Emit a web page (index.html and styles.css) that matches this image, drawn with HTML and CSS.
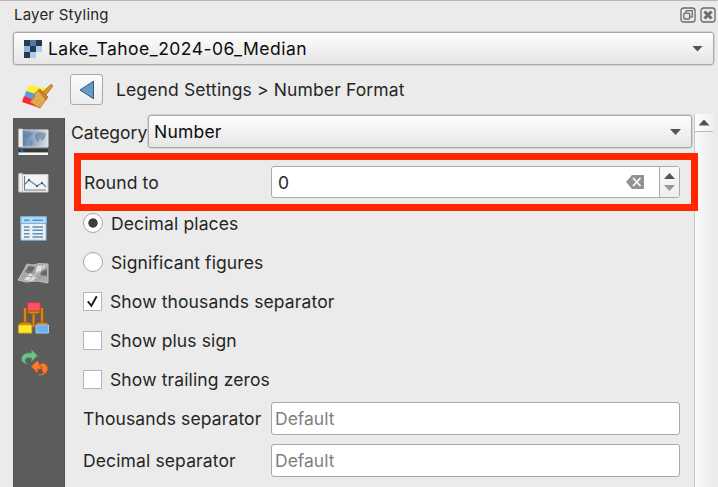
FILE: index.html
```html
<!DOCTYPE html>
<html lang="en">
<head>
<meta charset="utf-8">
<title>Layer Styling</title>
<link rel="stylesheet" href="styles.css">
</head>
<body>
<header class="titlebar">
  <span class="title">Layer Styling</span>
  <svg class="win" viewBox="0 0 16 16"><rect x="1" y="1" width="14" height="14" rx="2.6"/><path d="M6 3.7h6.2v6.2H10M6 3.7V6"/><rect x="3.9" y="6.2" width="5.7" height="5.8" rx="1"/></svg>
  <svg class="win" viewBox="0 0 16 16"><rect x="1" y="1" width="14" height="14" rx="2.6"/><path class="cross" d="M4.5 4.5l7 7M11.5 4.5l-7 7"/></svg>
</header>
<div class="combo layer">
  <svg class="raster" viewBox="0 0 18 18"><path fill="#a9cdef" d="M0 0h18v18H0z"/><path fill="#27394c" d="M0 0h6v6H0zM12 0h6v6h-6zM6 6h6v6H6zM0 12h6v6H0z"/><path fill="#4f79a5" d="M6 0h6v6H6z"/><path fill="#8ab4dd" d="M0 6h6v6H0z"/><path fill="#ececec" d="M12 12h6v6h-6z"/></svg>
  <span class="layer-name">Lake_Tahoe_2024-06_Median</span>
  <i class="down"></i>
</div>
<main class="panel">
  <aside class="side">
    <div class="active-tab">
      <svg class="brush" viewBox="0 0 32 26"><path fill="#fff02d" d="M7 1q10 3 18 3l-3 10L4 8z"/><path fill="#5d9cd6" d="M4 7l17 5-3 8L2 14z"/><path fill="#ff2638" d="M2 12l15 6 1 6L0 18z"/><g stroke="#ad6c20" stroke-width=".8"><path fill="#d99537" d="M28.5.7q3-.5 1.700 2.400L23 12l-3-3z"/><path fill="#e5ac58" d="M14 8l4-2 7 7-2 4-5 7q-5-2-10-6 4-4 6-10z"/><path fill="#c58535" d="M16 6l2-1 8 8-2 3z"/><path d="M14 12l-4 6m7-3l-4 6m6-3l-3 5" fill="none" stroke="#c88a3c"/></g></svg>
    </div>
    <nav class="tabs">
      <svg class="map" viewBox="0 0 31 28"><defs><linearGradient id="sea"><stop stop-color="#577fae"/><stop offset="1" stop-color="#dce3ea"/></linearGradient></defs><path fill="url(#sea)" stroke="#dfe1df" d="M4 2h26v17H4z"/><path fill="#697f9b" opacity=".65" d="M6 6l5-2 4 2-4 3-2 2-3-3zM12 12l3 1-1 5-2-2zM17 6l4-2 7 1-1 5-3 3-2-3-2 5-3-5z"/><path fill="#efefed" stroke="#c9cbc8" stroke-width=".7" d="M.7 1h3.8v18H.7z"/><path fill="#343739" d="M.5 21H30v3H.5z"/><path fill="#1c69c5" d="M3 21h2v4H3z"/><path fill="#f3f3f1" d="M.5 24.5H30V27H.5z"/></svg>
      <svg class="graph" viewBox="0 0 31 20"><path fill="#f3f3f2" stroke="#c9cac9" d="M4 1.5h26V19H4z"/><path fill="#eee" stroke="#c7c8c7" d="M.8.7h3.7V19H.8z"/><path fill="none" stroke="#7a7a7a" d="M6.5 3v14H28"/><path fill="none" stroke="#5984b1" stroke-width="1.2" d="M6 12l5-5 8 6 5-3 4 4"/><path fill="#315d91" d="M10 6h2v2h-2zM18 12h2v2h-2zM23 9h2v2h-2z"/></svg>
      <svg class="table" viewBox="0 0 27 25"><path fill="#efefee" stroke="#69a5d6" d="M.8.7h25.4v23.6H.8z"/><path fill="#b4dcf6" stroke="#76b0dc" d="M.8.7h25.4v6.7H.8z"/><path fill="none" stroke="#5493cc" stroke-width="1.4" d="M4 4.2h5.5m3 0H23M4 11h5.5m3 0H23M4 14.3h5.5m3 0H23M4 17.7h5.5m3 0H23M4 21h5.5m3 0H23"/></svg>
      <svg class="terrain" viewBox="0 0 31 23"><path fill="#a9aaa9" stroke="#bebebe" d="M9 2q8 2 11-.5L30 2v19l-11-2-11 1-8-2q5-8 9-16z"/><path fill="#686868" d="M11 4l6 1-4 7-6-2zM23 9l6-2v7l-7-1z"/><path fill="#e2e2e1" d="M19 4l9-1-5 7-6 2zM12 11l7 4-5 4-8-1z"/><path stroke="#999" stroke-width=".7" fill="none" d="M6 8q9 5 23 0M3 14q13 1 26 1M19 3l-7 15M25 2l-4 17"/></svg>
      <svg class="brushes" viewBox="0 0 31 32"><path fill="none" stroke="#9e5c09" stroke-width="3.6" d="M7 6v17M15.5 10v16M24 6v17"/><path fill="none" stroke="#d98b22" stroke-width="1.8" d="M7 6v17M15.5 10v15M24 6v17"/><path fill="#fa5264" stroke="#d93641" d="M9.5.7h12.7v9H9.5z"/><path fill="#d28823" stroke="#9c5907" d="M9.5 9h12.7q0 3-5 3h-3q-4.7 0-4.7-3zM.7 23q0-3 4-3h5q4 0 4 3zM18 23q0-3 4-3h4q4 0 4 3z"/><path fill="#ffe82d" stroke="#ddb51a" d="M.7 23h13v8H.7z"/><path fill="#72aff0" stroke="#a1cdf3" d="M18 23h12.5v8H18z"/></svg>
      <svg class="history" viewBox="0 0 27 27"><path fill="#6fc08c" stroke="#419362" stroke-width=".8" d="M6.5 15Q-.5 14 .7 8.500 2.500 3 10.500 4V.7l6 6-6 6V9Q5 8 4 11q0 2 2.500 4z"/><path fill="#fa7b2b" stroke="#e45e12" stroke-width=".8" d="M16.5 11.500l-6 6 6 6.500v-4q5 .5 4.500-2-.5-1.500-3-1.500 3.500-3.500 7-.5 3 3 .5 7-3 4-8 3 4-.5 5-2.500"/></svg>
    </nav>
  </aside>
  <section class="content">
    <div class="crumbs">
      <span class="back"><svg viewBox="0 0 16 20"><path fill="#649bcb" stroke="#35577b" d="M14.5 1.2v17.5L1 10z"/></svg></span>
      <span class="crumb-text">Legend Settings &gt; Number Format</span>
    </div>
    <div class="scroller">
      <form class="form">
        <div class="category"><label class="category-label">Category</label><div class="combo select"><span class="number">Number</span><i class="down"></i></div></div>
        <div class="highlight">
          <label class="round-label">Round to</label>
          <div class="spin"><span class="zero">0</span>
            <svg class="clear" viewBox="0 0 18 14"><path fill="#939393" d="M6 0h12v14H6L0 7z"/><path stroke="#fff" stroke-width="1.7" d="M7 3l7.5 8M14.5 3L7 11"/></svg>
            <span class="steps"><i class="up"></i><i class="down muted"></i></span>
          </div>
        </div>
        <div class="options">
          <div class="option"><i class="radio on"></i><label>Decimal places</label></div>
          <div class="option"><i class="radio"></i><label>Significant figures</label></div>
          <div class="option check"><i class="box"><svg viewBox="0 0 17 17"><path d="M3.8 8.3l3.6 4.5 5.3-9.6"/></svg></i><label>Show thousands separator</label></div>
          <div class="option check"><i class="box"></i><label>Show plus sign</label></div>
          <div class="option check"><i class="box"></i><label>Show trailing zeros</label></div>
        </div>
        <div class="fields">
          <label>Thousands separator</label><div class="field"><span>Default</span></div>
          <label>Decimal separator</label><div class="field"><span>Default</span></div>
        </div>
      </form>
      <div class="scrollbar"><div class="scroll-up"><i class="up"></i></div></div>
    </div>
  </section>
</main>
</body>
</html>
```
FILE: styles.css
```css
* { box-sizing: border-box; }
body { margin: 0; width: 718px; height: 487px; overflow: hidden; display: flex; flex-direction: column; background: #ebebeb; border-top: 1px solid #b9b9b9; color: #262626; font: 17.5px/20px Inter, "Liberation Sans", sans-serif; letter-spacing: .13px; }
span, label { white-space: nowrap; }
svg { display: block; flex: none; overflow: visible; }
.titlebar { height: 31px; flex: none; display: flex; align-items: center; gap: 4px; padding: 0 2px 3px 14px; }
.title { margin-right: auto; font-size: 15px; letter-spacing: .2px; }
.win { width: 16px; height: 16px; fill: #e9e9e9; stroke: #6c6b65; stroke-width: 1.3; }
.win .cross { stroke-width: 3; }
.combo { display: flex; align-items: center; border: 1px solid #a9a9a9; border-radius: 3px; background: linear-gradient(#fdfdfd, #e6e6e6); box-shadow: 0 0 0 .5px #bcbcbc; color: #0c0c0c; }
.combo > .down { margin-left: auto; }
.layer { flex: none; width: 701px; height: 33px; margin-left: 13px; padding: 0 10px; }
.layer-name { letter-spacing: .47px; padding-top: 1px; }
.raster { width: 18px; height: 18px; margin-right: 6px; }
.down, .up { width: 11px; height: 6px; background: #545454; clip-path: polygon(0 0, 100% 0, 50% 100%); }
.up { clip-path: polygon(0 100%, 100% 100%, 50% 0); }
.muted { background: #999; }
.panel { flex: 1; min-height: 0; display: grid; grid-template-columns: 52.5px 1fr; margin-left: 12.5px; }
.side { display: flex; flex-direction: column; }
.active-tab { height: 53px; flex: none; padding: 19px 0 0 9px; }
.brush { width: 32px; height: 26px; }
.tabs { flex: 1; padding: 10px 0 0 4.5px; display: flex; flex-direction: column; background: #5c5c5c; border-left: 1px solid #525252; border-right: 1px solid #505050; }
.map { width: 31px; height: 28px; margin-bottom: 17px; }
.graph { width: 31px; height: 20px; margin-bottom: 23px; }
.table { width: 27px; height: 25px; margin: 0 0 21px 2px; }
.terrain { width: 31px; height: 23px; margin-bottom: 17px; }
.brushes { width: 31px; height: 32px; margin-bottom: 15px; }
.history { width: 27px; height: 27px; margin-left: 3px; }
.content { min-width: 0; display: flex; flex-direction: column; }
.crumbs { height: 49px; flex: none; display: flex; align-items: center; padding: 0 0 0 5px; }
.back { width: 33px; height: 31px; display: grid; place-items: center; margin-right: 13px; border: 1px solid #aaa; border-radius: 3px; background: linear-gradient(#fbfbfb, #ededed); }
.back svg { width: 16px; height: 20px; }
.scroller { flex: 1; display: flex; }
.form { width: 629px; flex: none; }
.category { height: 39px; display: flex; padding: 1px 0 0 6px; }
.category-label { width: 77px; line-height: 36px; letter-spacing: 0; }
.select { width: 544px; height: 33px; padding: 1px 10px 0 5px; letter-spacing: .2px; }
.highlight { position: relative; z-index: 1; width: 624px; height: 58px; margin-left: 9px; border: 7px solid #ff2600; display: flex; align-items: center; padding-left: 3px; }
.round-label { width: 187px; padding-top: 1px; }
.spin { flex: none; width: 409px; height: 32px; display: flex; align-items: center; padding-left: 6px; border: 1px solid #aaa; border-radius: 3px; background: #fff; }
.zero { padding-top: 1px; }
.clear { width: 18px; height: 14px; margin: 0 15px 0 auto; }
.steps { width: 20px; height: 100%; display: flex; flex-direction: column; align-items: center; justify-content: center; gap: 6px; border-left: 1px solid #aaa; background: linear-gradient(#fafafa, #eee); }
.options { margin-top: -7px; padding-left: 18px; }
.option { height: 38.9px; display: flex; align-items: center; gap: 8px; }
.option label { padding-top: 1px; }
.check { gap: 7px; }
.radio, .box { width: 20px; height: 20px; flex: none; border: 1px solid #a6a6a6; background: #fff; }
.radio { border-radius: 50%; }
.on { background: radial-gradient(circle, #3e3e3e 4.3px, #fff 5px); }
.box { width: 19px; height: 19px; margin-right: 1px; border-color: #b6b6b6; }
.box svg { width: 17px; height: 17px; fill: none; stroke: #222; stroke-width: 2; }
.fields { display: grid; grid-template-columns: 188px 409px; grid-auto-rows: 33px; row-gap: 9px; align-items: center; padding: 3.5px 0 0 18px; }
.fields label { padding-top: 2px; }
.field { height: 33px; display: flex; align-items: center; padding: 1px 0 0 3px; border: 1px solid #a9a9a9; border-radius: 3px; background: #fff; color: #7f7f7f; letter-spacing: 0; }
.scrollbar { width: 19px; border-left: 1px solid #c5c5c5; background: linear-gradient(90deg, #fafafa, #ececec); }
.scroll-up { height: 18px; display: grid; place-items: center; border-bottom: 1px solid #bababa; background: linear-gradient(90deg, #fff, #f0f0f0); }
```
